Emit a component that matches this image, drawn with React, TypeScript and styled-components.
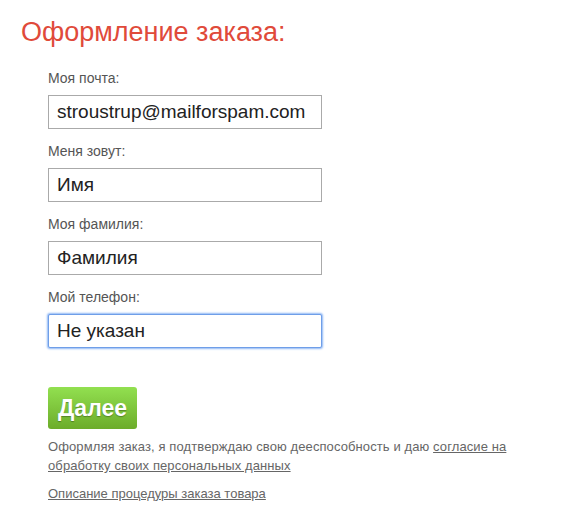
import React from "react";
import styled, { createGlobalStyle } from "styled-components";

const Global = createGlobalStyle`
  html, body { margin: 0; padding: 0; background: #fff; }
  body { font-family: "Liberation Sans", Arial, sans-serif; }
`;

const Page = styled.div`
  padding: 15px 0 0 21px;
`;

const Title = styled.h1`
  margin: 0;
  font-weight: normal;
  font-size: 27px;
  line-height: 34px;
  color: #e04a3a;
`;

const Form = styled.form`
  display: flex;
  flex-direction: column;
  padding: 21px 0 0 27px;
`;

const Field = styled.div`
  display: flex;
  flex-direction: column;
  gap: 8px;
  margin-bottom: 14px;
`;

const Label = styled.label`
  font-size: 14px;
  line-height: 17px;
  color: #555;
`;

const Input = styled.input<{ $focused?: boolean }>`
  box-sizing: border-box;
  width: 274px;
  height: 34px;
  padding: 0 8px;
  border: 1px solid ${(p) => (p.$focused ? "#6f9ee8" : "#aaa")};
  box-shadow: ${(p) => (p.$focused ? "0 0 2px 1px #8fb8f5" : "none")};
  font-family: "Liberation Sans", Arial, sans-serif;
  font-size: 19px;
  color: #222;
  outline: none;
  border-radius: ${(p) => (p.$focused ? "2px" : "0")};
`;

const Button = styled.button`
  align-self: flex-start;
  margin-top: 25px;
  width: 89px;
  height: 42px;
  border: none;
  border-radius: 3px;
  background: linear-gradient(#92e050, #6cac2a);
  color: #fff;
  font-family: "Liberation Sans", Arial, sans-serif;
  font-weight: bold;
  font-size: 23px;
  text-shadow: 0 1px 1px rgba(0, 0, 0, 0.3);
  padding: 0;
`;

const Note = styled.p`
  margin: 8px 0 0;
  font-size: 13px;
  line-height: 19px;
  letter-spacing: 0.1px;
  color: #666;
  width: 480px;
`;

const Link = styled.a`
  color: #666;
  text-decoration: underline;
`;

const Bottom = styled.p`
  margin: 9px 0 0;
  font-size: 13px;
  line-height: 19px;
`;

const fields = [
  { label: "Моя почта:", value: "stroustrup@mailforspam.com" },
  { label: "Меня зовут:", value: "Имя" },
  { label: "Моя фамилия:", value: "Фамилия" },
  { label: "Мой телефон:", value: "Не указан", focused: true },
];

export default function App() {
  return (
    <Page>
      <Global />
      <Title>Оформление заказа:</Title>
      <Form onSubmit={(e) => e.preventDefault()}>
        {fields.map((f) => (
          <Field key={f.label}>
            <Label>{f.label}</Label>
            <Input $focused={f.focused} defaultValue={f.value} autoFocus={f.focused} />
          </Field>
        ))}
        <Button type="button">Далее</Button>
        <Note>
          Оформляя заказ, я подтверждаю свою дееспособность и даю{" "}
          <Link href="#">согласие на обработку своих персональных данных</Link>
        </Note>
        <Bottom>
          <Link href="#">Описание процедуры заказа товара</Link>
        </Bottom>
      </Form>
    </Page>
  );
}
